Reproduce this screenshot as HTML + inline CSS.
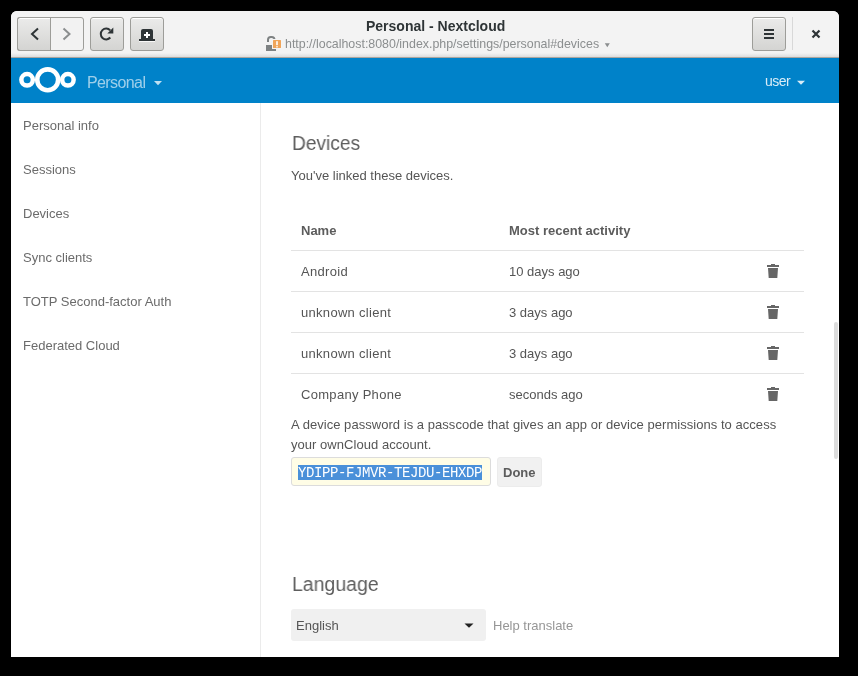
<!DOCTYPE html>
<html><head><meta charset="utf-8">
<style>
*{box-sizing:border-box;margin:0;padding:0}
html,body{width:858px;height:676px;background:#000;overflow:hidden;font-family:"Liberation Sans",sans-serif;position:relative}
#win{position:absolute;left:11px;top:11px;width:828px;height:646px;background:#fff;border-radius:6px 6px 0 0;overflow:hidden}
#hb{position:absolute;left:11px;top:11px;width:828px;height:47px;border-radius:6px 6px 0 0;background:linear-gradient(to bottom,#f3f3f3 0,#f3f3f3 42px,#dcdcdc 46px);border-bottom:1px solid #aaa59f}
.btn{position:absolute;top:17px;height:34px;border:1px solid #9d9d99;border-radius:3px;background:linear-gradient(to bottom,#ebebea,#d4d4d2);box-shadow:inset 0 1px #fff}
#nav{position:absolute;left:11px;top:58px;width:828px;height:45px;background:#0082c9}
#side{position:absolute;left:260px;top:103px;width:1px;height:554px;background:#ebebeb}
.t{position:absolute;white-space:nowrap;line-height:1;will-change:transform}
.s{font-size:13px;color:#6b6b6b;left:23px}
.m{font-size:13px;color:#555}
.b{font-size:13px;color:#5c5c5c;font-weight:bold}
.hr{position:absolute;left:291px;width:513px;height:1px;background:#e3e3e3}
</style></head><body>
<div id="win"></div>
<div id="hb"></div>
<div class="btn" style="left:17px;width:67px;background:#f2f2f2;box-shadow:none"></div>
<div class="btn" style="left:17px;width:34px;border-right:none;border-radius:3px 0 0 3px"></div>
<div style="position:absolute;left:50px;top:17px;width:1px;height:34px;background:#9d9d99"></div>
<div class="btn" style="left:90px;width:34px"></div>
<div class="btn" style="left:130px;width:34px"></div>
<div class="btn" style="left:752px;width:34px"></div>
<svg style="position:absolute;left:0;top:0" width="858" height="60">
  <path d="M38 28.5 L32 34 L38 39.5" fill="none" stroke="#2e3436" stroke-width="2"/>
  <path d="M63.5 28.5 L69.5 34 L63.5 39.5" fill="none" stroke="#8b8e8f" stroke-width="2"/>
  <path d="M110.2 30.4 A5.4 5.4 0 1 0 110.3 37.5" fill="none" stroke="#2e3436" stroke-width="2"/>
  <path d="M113.3 27.6 L113.3 33.6 L107.3 33.6 Z" fill="#2e3436"/>
  <path d="M139 39.5 L155 39.5 L155 42 L139 42 Z" fill="#fff" opacity=".8"/>
  <path d="M141 40 L141 31 Q141 29 143 29 L151 29 Q153 29 153 31 L153 39 L155 39 L155 41 L139 41 L139 39 L141 39 Z" fill="#2e3436"/>
  <path d="M146 32 L148 32 L148 34 L150 34 L150 36 L148 36 L148 38 L146 38 L146 36 L144 36 L144 34 L146 34 Z" fill="#fff"/>
  <rect x="764" y="29" width="10" height="2" fill="#2e3436"/>
  <rect x="764" y="33" width="10" height="2" fill="#2e3436"/>
  <rect x="764" y="37" width="10" height="2" fill="#2e3436"/>
  <path d="M812.5 30.5 L819.5 37.5 M819.5 30.5 L812.5 37.5" stroke="#2e3436" stroke-width="2.2"/>
  <rect x="792" y="17" width="1" height="33" fill="#d8d8d8"/>
  <path d="M268 42 L268 39.8 A2.8 2.8 0 0 1 270.8 37 L271.7 37 A2.8 2.8 0 0 1 274.5 39.8 L274.5 41" fill="none" stroke="#7e8283" stroke-width="2"/>
  <rect x="266" y="45" width="10" height="6" fill="#7e8283"/>
  <rect x="272" y="39" width="10" height="10" fill="#f4f4f4"/>
  <rect x="273" y="40" width="8" height="8" rx=".5" fill="#f0a55a"/>
  <rect x="276.2" y="41.2" width="1.6" height="4" fill="#fff"/>
  <rect x="276.2" y="46.2" width="1.6" height="1.2" fill="#fff"/>
  <path d="M604.8 43.2 L609.8 43.2 L607.3 47.2 Z" fill="#8b8e8f"/>
</svg>
<div class="t" style="left:366px;top:18.5px;font-size:14px;font-weight:bold;color:#2e3436">Personal - Nextcloud</div>
<div class="t" style="left:285px;top:37.6px;font-size:12.4px;color:#8b8e8f">http://localhost:8080/index.php/settings/personal#devices</div>

<div id="nav"></div>
<svg style="position:absolute;left:0;top:58px" width="858" height="45">
  <circle cx="27.1" cy="21.8" r="5.75" fill="none" stroke="#fff" stroke-width="4.5"/>
  <circle cx="47.7" cy="21.8" r="10.45" fill="none" stroke="#fff" stroke-width="4.6"/>
  <circle cx="67.9" cy="21.8" r="5.75" fill="none" stroke="#fff" stroke-width="4.5"/>
  <path d="M154 23 L162 23 L158 27.2 Z" fill="#fff" fill-opacity=".75"/>
  <path d="M797 22.8 L805 22.8 L801 26.8 Z" fill="#fff" fill-opacity=".85"/>
</svg>
<div class="t" style="left:87px;top:75px;font-size:16px;letter-spacing:-0.6px;color:rgba(255,255,255,.62)">Personal</div>
<div class="t" style="left:764.5px;top:74px;font-size:14px;letter-spacing:-0.5px;color:rgba(255,255,255,.85)">user</div>

<div id="side"></div>
<div class="t s" style="top:118.6px">Personal info</div>
<div class="t s" style="top:162.6px">Sessions</div>
<div class="t s" style="top:206.6px">Devices</div>
<div class="t s" style="top:250.6px">Sync clients</div>
<div class="t s" style="top:294.6px">TOTP Second-factor Auth</div>
<div class="t s" style="top:338.6px">Federated Cloud</div>

<div class="t" style="left:291.5px;top:133px;font-size:20px;color:#5e5e5e;transform:scaleX(.957);transform-origin:0 0">Devices</div>
<div class="t m" style="left:291px;top:169px">You've linked these devices.</div>

<div class="t b" style="left:301px;top:224px">Name</div>
<div class="t b" style="left:508.5px;top:224px">Most recent activity</div>
<div class="hr" style="top:250px"></div>
<div class="t m" style="left:301px;letter-spacing:.3px;top:265px">Android</div>
<div class="t m" style="left:508.5px;top:265px">10 days ago</div>
<div class="hr" style="top:291px"></div>
<div class="t m" style="left:301px;letter-spacing:.3px;top:306px">unknown client</div>
<div class="t m" style="left:508.5px;top:306px">3 days ago</div>
<div class="hr" style="top:332px"></div>
<div class="t m" style="left:301px;letter-spacing:.3px;top:347px">unknown client</div>
<div class="t m" style="left:508.5px;top:347px">3 days ago</div>
<div class="hr" style="top:373px"></div>
<div class="t m" style="left:301px;letter-spacing:.3px;top:388px">Company Phone</div>
<div class="t m" style="left:508.5px;top:388px">seconds ago</div>
<svg style="position:absolute;left:0;top:0" width="858" height="420">
  <g id="tr" fill="#666">
    <path d="M767 265 L779 265 L779 267 L767 267 Z M771 264 L775 264 L775 265 L771 265 Z M768 268 L778 268 L777.3 278 L768.7 278 Z"/>
  </g>
  <use href="#tr" y="41"/>
  <use href="#tr" y="82"/>
  <use href="#tr" y="123"/>
</svg>

<div class="t m" style="left:291px;top:415.2px;line-height:20px;letter-spacing:.04px">A device password is a passcode that gives an app or device permissions to access<br>your ownCloud account.</div>
<div style="position:absolute;left:291px;top:457px;width:200px;height:29px;background:#fffde6;border:1px solid #dcdcdc;border-radius:3px"></div>
<div style="position:absolute;left:298px;top:465px;width:184px;height:15px;background:#4a90d9"></div>
<div class="t" style="left:298px;top:466px;font-size:14px;letter-spacing:-0.4px;font-family:'Liberation Mono',monospace;color:#fff">YDIPP-FJMVR-TEJDU-EHXDP</div>
<div style="position:absolute;left:497px;top:457px;width:45px;height:30px;background:#f1f1f1;border:1px solid #ececec;border-radius:3px"></div>
<div class="t b" style="left:502.8px;top:465.8px">Done</div>

<div class="t" style="left:291.5px;top:574px;font-size:20px;color:#5e5e5e;transform:scaleX(.975);transform-origin:0 0">Language</div>
<div style="position:absolute;left:291px;top:609px;width:195px;height:32px;background:#f0f0f0;border-radius:3px"></div>
<div class="t m" style="left:296px;top:619.4px">English</div>
<svg style="position:absolute;left:0;top:600px" width="858" height="50">
  <path d="M464.5 23.4 L473.5 23.4 L469 27.8 Z" fill="#222"/>
</svg>
<div class="t m" style="left:493px;top:619.4px;color:#969696">Help translate</div>

<div style="position:absolute;left:834px;top:322px;width:4px;height:137px;background:#dcdcdc;border-radius:2px"></div>
</body></html>
